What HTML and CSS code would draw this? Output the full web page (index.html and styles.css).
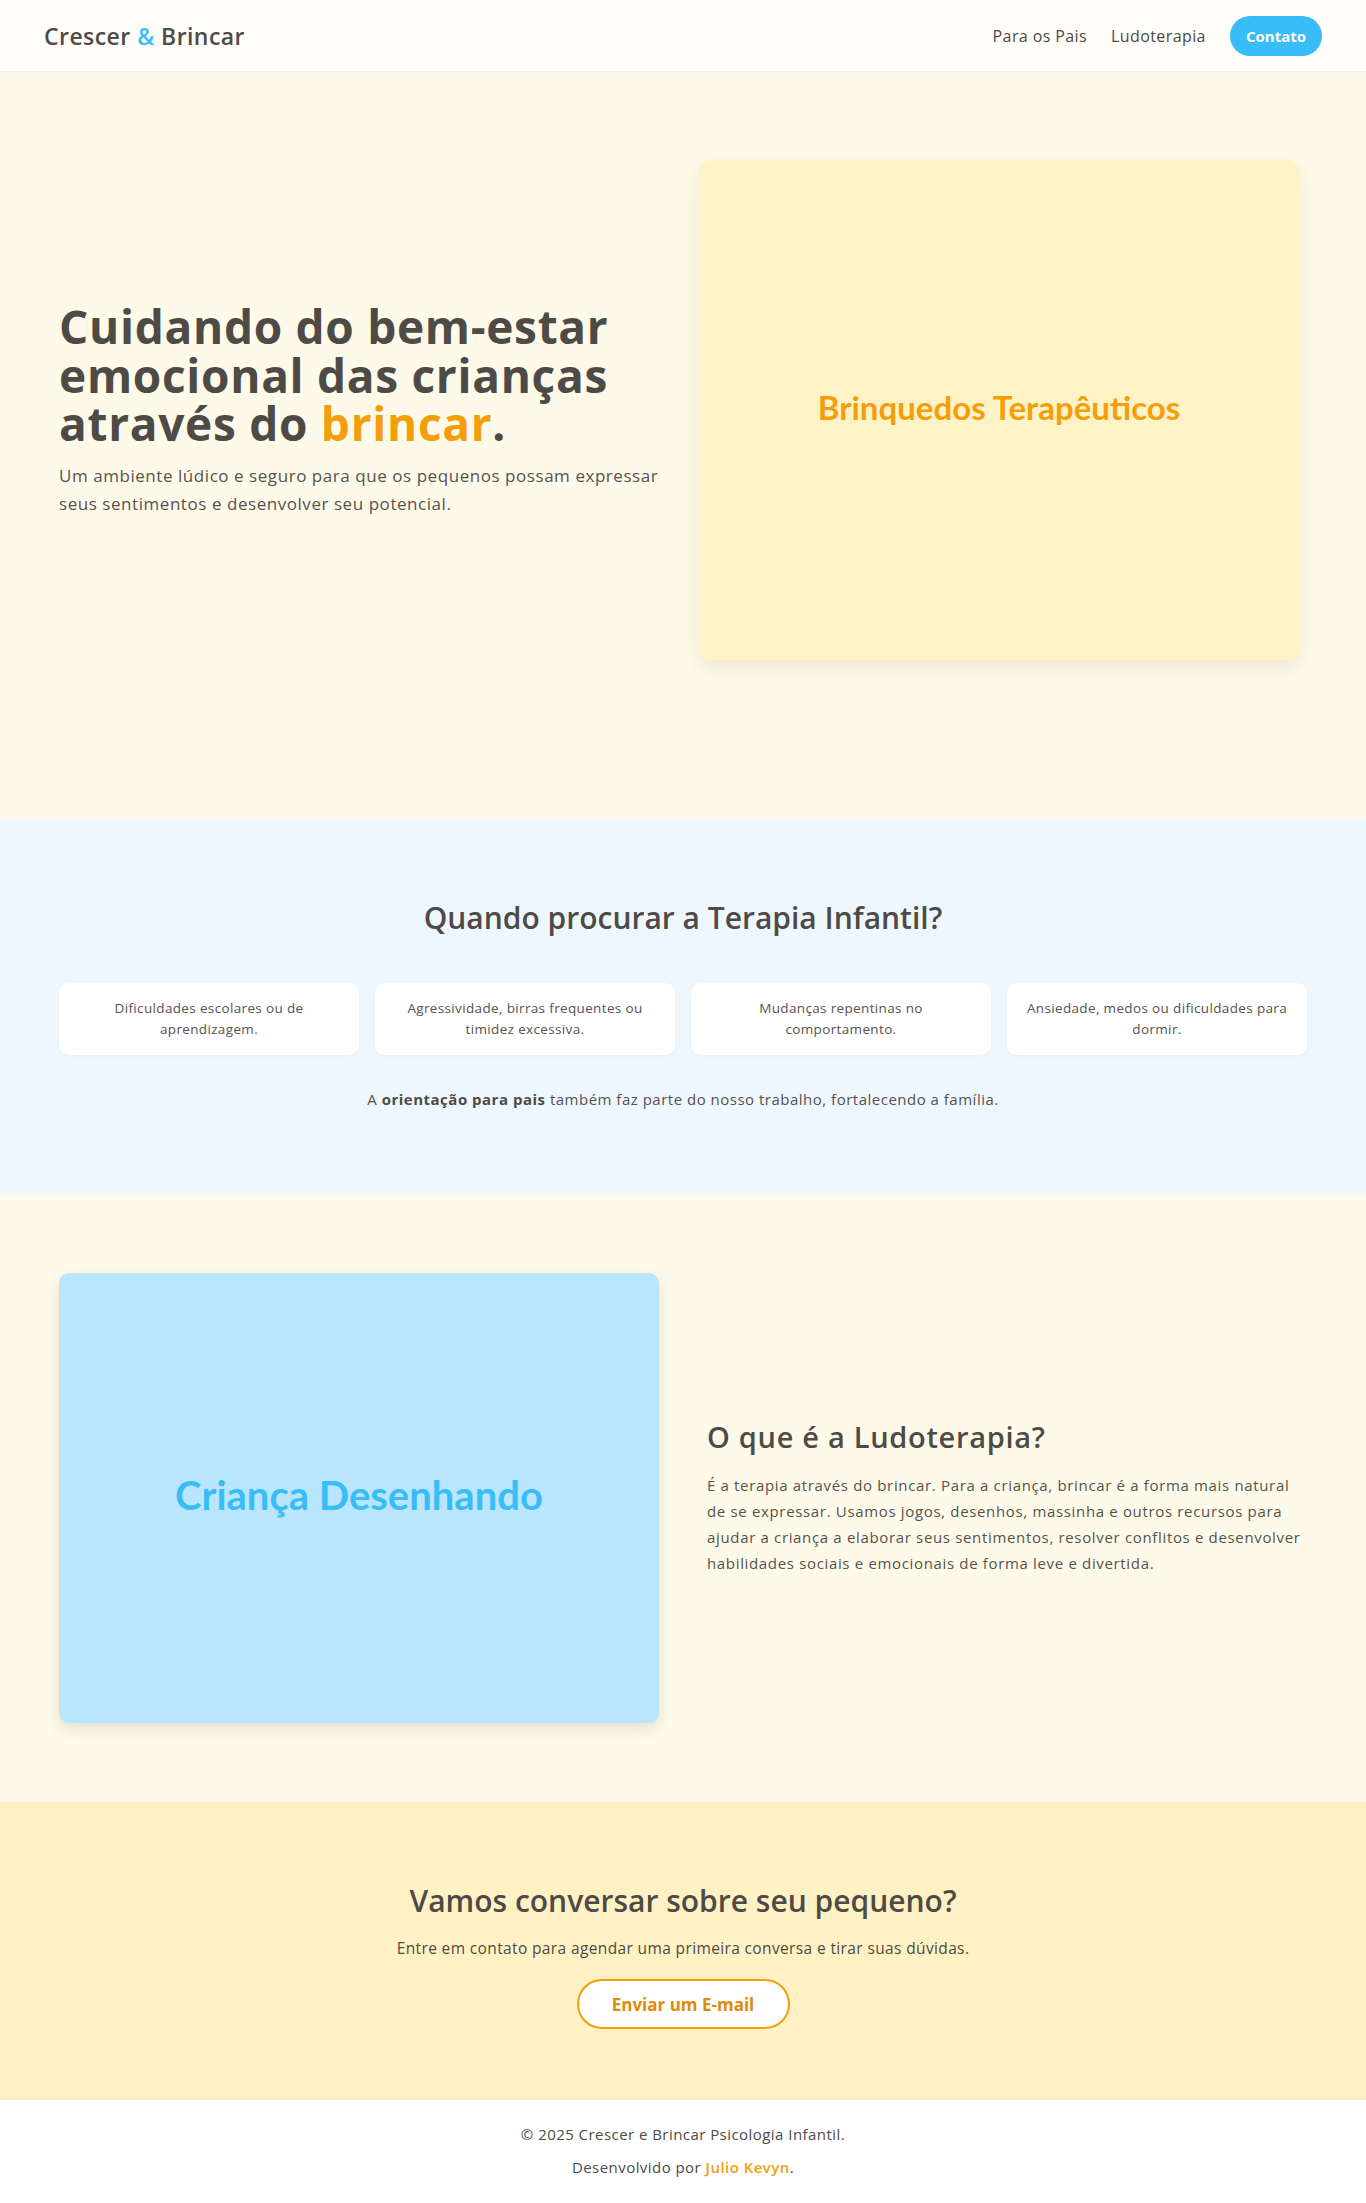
FILE: index.html
```html
<!DOCTYPE html>
<html lang="pt-BR">
<head>
<meta charset="utf-8">
<title>Crescer &amp; Brincar</title>
<link rel="stylesheet" href="styles.css">
</head>
<body>
<header class="navbar">
  <div class="logo">Crescer <span class="amp">&amp;</span> Brincar</div>
  <nav class="nav-links">
    <a href="#" class="nav-link">Para os Pais</a>
    <a href="#" class="nav-link">Ludoterapia</a>
    <a href="#" class="nav-btn">Contato</a>
  </nav>
</header>

<section class="hero">
  <div class="hero-grid">
    <div class="hero-text">
      <h1>Cuidando do bem-estar emocional das crianças através do <span class="accent">brincar</span>.</h1>
      <p>Um ambiente lúdico e seguro para que os pequenos possam expressar seus sentimentos e desenvolver seu potencial.</p>
    </div>
    <div class="hero-card">Brinquedos Terapêuticos</div>
  </div>
</section>

<section class="when">
  <h2 class="when-title">Quando procurar a Terapia Infantil?</h2>
  <div class="when-grid">
    <div class="when-card">Dificuldades escolares ou de aprendizagem.</div>
    <div class="when-card">Agressividade, birras frequentes ou timidez excessiva.</div>
    <div class="when-card">Mudanças repentinas no comportamento.</div>
    <div class="when-card">Ansiedade, medos ou dificuldades para dormir.</div>
  </div>
  <p class="when-note">A <strong>orientação para pais</strong> também faz parte do nosso trabalho, fortalecendo a família.</p>
</section>

<section class="ludo">
  <div class="ludo-grid">
    <div class="ludo-img">Criança Desenhando</div>
    <div class="ludo-text">
      <h2>O que é a Ludoterapia?</h2>
      <p>É a terapia através do brincar. Para a criança, brincar é a forma mais natural de se expressar. Usamos jogos, desenhos, massinha e outros recursos para ajudar a criança a elaborar seus sentimentos, resolver conflitos e desenvolver habilidades sociais e emocionais de forma leve e divertida.</p>
    </div>
  </div>
</section>

<section class="cta">
  <h2>Vamos conversar sobre seu pequeno?</h2>
  <p>Entre em contato para agendar uma primeira conversa e tirar suas dúvidas.</p>
  <a href="#" class="cta-btn">Enviar um E-mail</a>
</section>

<footer class="footer">
  <p>© 2025 Crescer e Brincar Psicologia Infantil.</p>
  <p>Desenvolvido por <a href="#" class="dev">Julio Kevyn</a>.</p>
</footer>
</body>
</html>
```

FILE: styles.css
```css
* { box-sizing: border-box; }

body {
  margin: 0;
  font-family: "Open Sans", "Noto Sans", sans-serif;
  color: #4e4a46;
  background: #fefae9;
}

a { text-decoration: none; }

/* NAV */
.navbar {
  height: 72px;
  padding: 0 44px;
  display: flex;
  align-items: center;
  justify-content: space-between;
  background: #fffdf9;
  border-bottom: 1px solid #f3efe4;
  box-shadow: 0 1px 3px rgba(0,0,0,0.03);
}
.logo {
  font-size: 23px;
  font-weight: 600;
  color: #4e4a46;
  letter-spacing: 0.45px;
}
.amp { color: #38bdf8; }
.nav-links {
  display: flex;
  align-items: center;
  gap: 24px;
}
.nav-link {
  font-size: 16px;
  font-weight: 500;
  color: #4e4a46;
  letter-spacing: 0.4px;
}
.nav-btn {
  display: inline-flex;
  align-items: center;
  height: 40px;
  padding: 0 16px;
  border-radius: 20px;
  background: #38bdf8;
  color: #fff;
  font-size: 15px;
  font-weight: 700;
}

/* HERO */
.hero {
  background: #fefae9;
  padding: 88px 59px 159px;
}
.hero-grid {
  display: grid;
  grid-template-columns: 600px 600px;
  gap: 40px;
  align-items: center;
}
.hero-text h1 {
  margin: 0 0 14px;
  font-size: 46px;
  line-height: 48.5px;
  font-weight: 700;
  color: #4e4a46;
  letter-spacing: 0.7px;
}
.accent { color: #f59e0b; }
.hero-text p {
  margin: 0;
  font-size: 17px;
  line-height: 28px;
  color: #57524d;
  letter-spacing: 0.55px;
}
.hero-card {
  height: 500px;
  border-radius: 12px;
  background: #fef3c7;
  box-shadow: 0 8px 20px rgba(120, 100, 40, 0.12);
  display: flex;
  align-items: center;
  justify-content: center;
  padding-bottom: 6px;
  font-family: Lato, sans-serif;
  font-weight: 700;
  font-size: 33px;
  color: #f59e0b;
}

/* WHEN */
.when {
  background: #eff7fe;
  padding: 80px 59px 82px;
  text-align: center;
}
.when-title {
  margin: 0 0 46px;
  font-size: 30px;
  line-height: 38px;
  font-weight: 600;
  color: #4e4a46;
}
.when-grid {
  display: grid;
  grid-template-columns: repeat(4, 1fr);
  gap: 16px;
}
.when-card {
  background: #fff;
  border-radius: 10px;
  padding: 15px 18px;
  font-size: 13.5px;
  line-height: 21px;
  color: #57524d;
  letter-spacing: 0.35px;
  box-shadow: 0 1px 3px rgba(0,0,0,0.04);
}
.when-note {
  margin: 32px 0 0;
  font-size: 15px;
  line-height: 24px;
  color: #57524d;
  letter-spacing: 0.5px;
}
.when-note strong { font-weight: 700; color: #4e4a46; }

/* LUDO */
.ludo {
  background: #fefae9;
  padding: 80px 59px 79px;
}
.ludo-grid {
  display: grid;
  grid-template-columns: 600px 600px;
  gap: 48px;
  align-items: center;
}
.ludo-img {
  height: 450px;
  border-radius: 10px;
  background: #bae6fd;
  box-shadow: 0 6px 14px rgba(60, 80, 100, 0.15);
  display: flex;
  align-items: center;
  justify-content: center;
  padding-bottom: 6px;
  font-family: Lato, sans-serif;
  font-weight: 700;
  font-size: 40px;
  color: #38bdf8;
}
.ludo-text h2 {
  margin: 0 0 18px;
  font-size: 29px;
  line-height: 34px;
  font-weight: 600;
  color: #4e4a46;
  letter-spacing: 0.7px;
}
.ludo-text p {
  margin: 0;
  font-size: 15px;
  line-height: 26px;
  color: #57524d;
  letter-spacing: 0.66px;
}

/* CTA */
.cta {
  background: #fef2c4;
  padding: 81px 59px 70px;
  text-align: center;
}
.cta h2 {
  margin: 0 0 17px;
  font-size: 30px;
  line-height: 36px;
  font-weight: 600;
  color: #4e4a46;
}
.cta p {
  margin: 0 0 19px;
  font-size: 15.5px;
  line-height: 24px;
  color: #4e4a46;
  letter-spacing: 0.37px;
}
.cta-btn {
  display: inline-flex;
  align-items: center;
  justify-content: center;
  width: 213px;
  height: 50px;
  border: 2px solid #f59e0b;
  border-radius: 25px;
  background: #fff;
  color: #e08a0b;
  font-size: 17px;
  font-weight: 700;
}

/* FOOTER */
.footer {
  background: #fff;
  border-top: 1px solid #ece9e2;
  padding: 23px 0 25px;
  text-align: center;
  display: flex;
  flex-direction: column;
  gap: 10px;
}
.footer p {
  margin: 0;
  font-size: 15px;
  line-height: 23px;
  color: #4e4a46;
  letter-spacing: 0.45px;
}
.dev {
  color: #f59e0b;
  font-weight: 600;
}
```
